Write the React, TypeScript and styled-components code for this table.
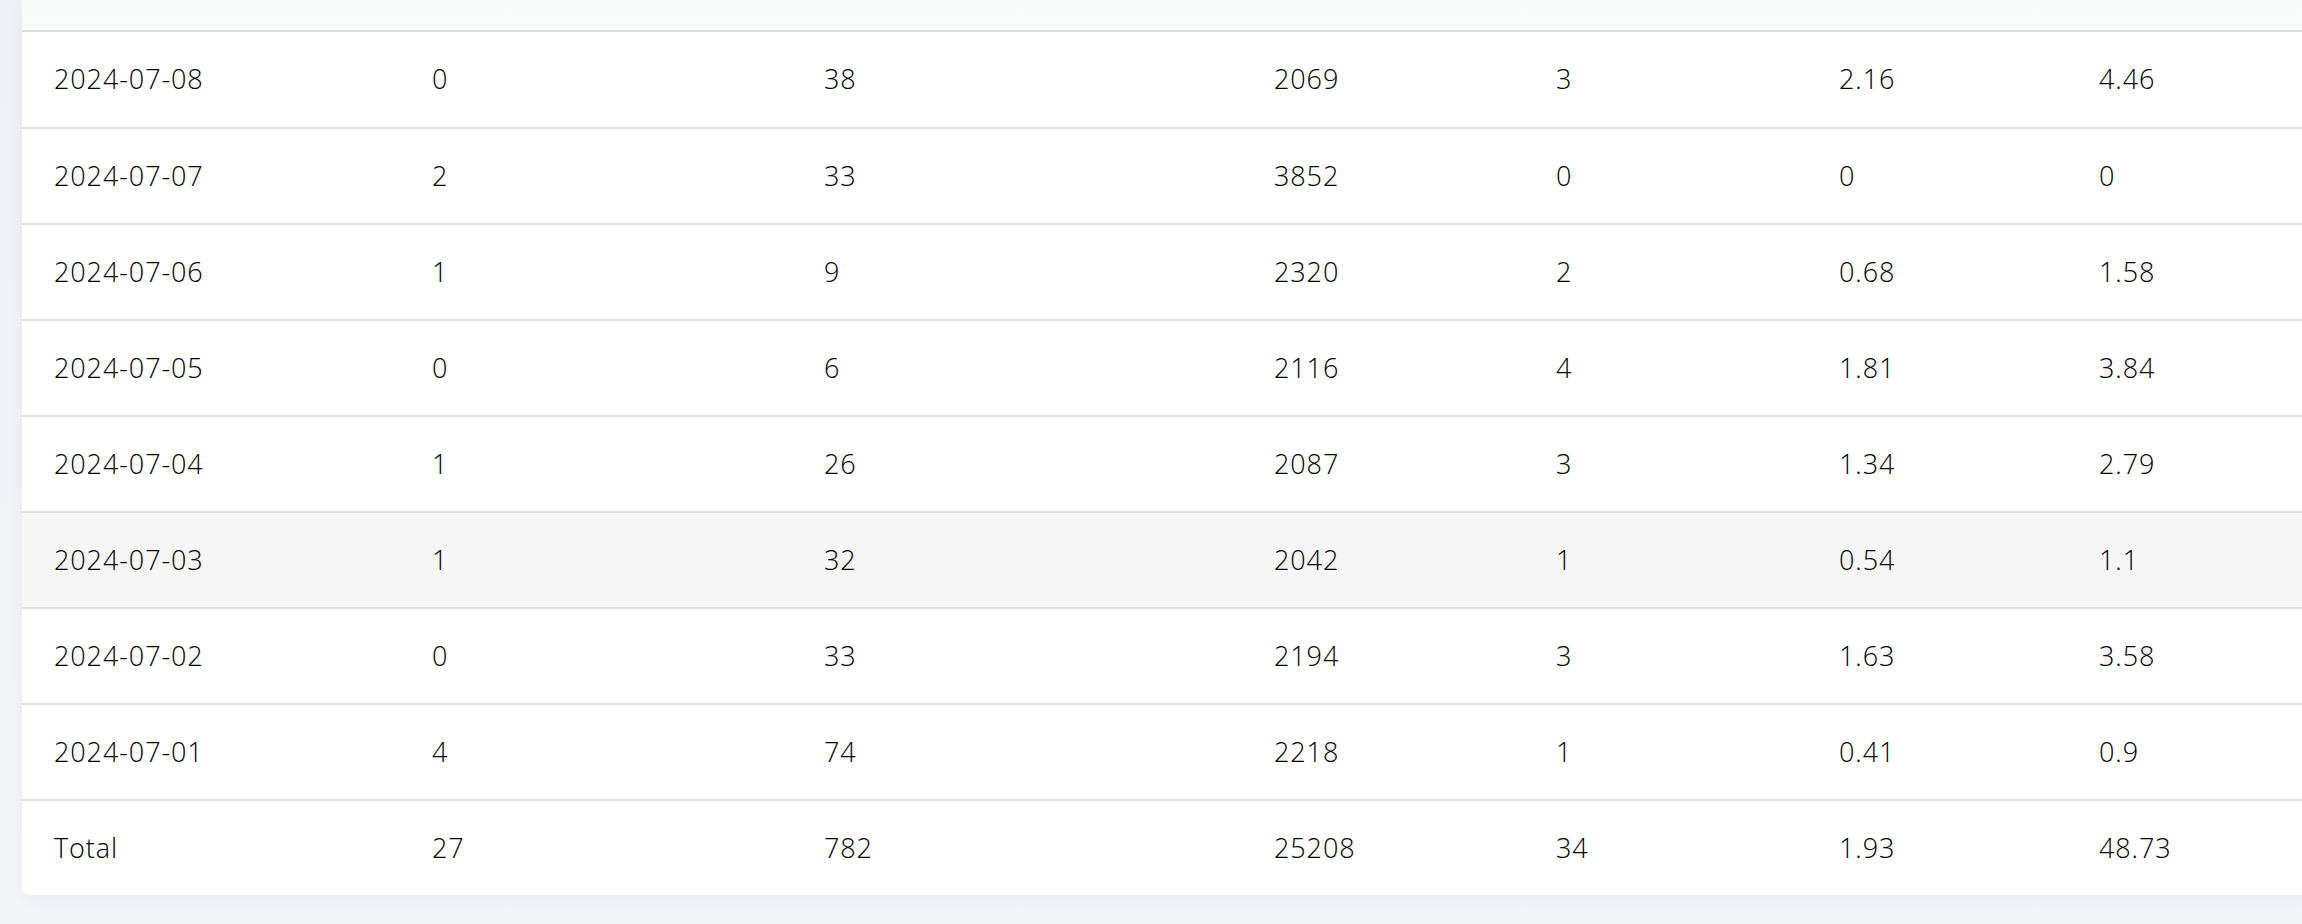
import React from "react";
import styled, { createGlobalStyle } from "styled-components";

const GlobalStyle = createGlobalStyle`
  html, body {
    margin: 0;
    padding: 0;
    background: #f3f4f8;
    overflow: hidden;
  }
  body {
    font-family: "Open Sans", "DejaVu Sans", sans-serif;
    color: #000000;
  }
`;

const Page = styled.div`
  width: 2302px;
  height: 924px;
  overflow: hidden;
  background: linear-gradient(180deg, #eef0f5 0%, #f3f4f8 100%);
  display: flex;
  flex-direction: column;
  padding-left: 22px;
  box-sizing: border-box;
`;

const Panel = styled.div`
  width: 2420px;
  background: #ffffff;
  border-radius: 0 0 8px 8px;
  box-shadow: 0 6px 18px rgba(30, 40, 80, 0.04);
  overflow: hidden;
`;

const HeaderStrip = styled.div`
  height: 30px;
  background: linear-gradient(180deg, #f7f8f8 0%, #fafbfb 100%);
  border-bottom: 2px solid #dedede;
`;

const Table = styled.table`
  width: 100%;
  border-collapse: collapse;
  table-layout: fixed;
  font-size: 27px;
  line-height: 1;
  letter-spacing: 0.9px;
`;

const Row = styled.tr<{ $highlight?: boolean; $last?: boolean }>`
  height: ${(p) => (p.$last ? "95px" : "96px")};
  background: ${(p) => (p.$highlight ? "#f6f6f6" : "#ffffff")};
  border-bottom: ${(p) => (p.$last ? "none" : "2px solid #e0e0e0")};
`;

const Cell = styled.td`
  padding: 0 0 2px 32px;
  vertical-align: middle;
  white-space: nowrap;
  color: #000000;
  font-weight: 300;
`;

const widths = [378, 392, 450, 282, 283, 260, 635];

const rows: string[][] = [
  ["2024-07-08", "0", "38", "2069", "3", "2.16", "4.46"],
  ["2024-07-07", "2", "33", "3852", "0", "0", "0"],
  ["2024-07-06", "1", "9", "2320", "2", "0.68", "1.58"],
  ["2024-07-05", "0", "6", "2116", "4", "1.81", "3.84"],
  ["2024-07-04", "1", "26", "2087", "3", "1.34", "2.79"],
  ["2024-07-03", "1", "32", "2042", "1", "0.54", "1.1"],
  ["2024-07-02", "0", "33", "2194", "3", "1.63", "3.58"],
  ["2024-07-01", "4", "74", "2218", "1", "0.41", "0.9"],
];

const total = ["Total", "27", "782", "25208", "34", "1.93", "48.73"];

export default function App() {
  return (
    <>
      <GlobalStyle />
      <Page>
        <Panel>
          <HeaderStrip />
          <Table>
            <colgroup>
              {widths.map((w, i) => (
                <col key={i} style={{ width: `${w}px` }} />
              ))}
            </colgroup>
            <tbody>
              {rows.map((r) => (
                <Row key={r[0]} $highlight={r[0] === "2024-07-03"}>
                  {r.map((c, i) => (
                    <Cell key={i}>{c}</Cell>
                  ))}
                </Row>
              ))}
              <Row $last>
                {total.map((c, i) => (
                  <Cell key={i}>{c}</Cell>
                ))}
              </Row>
            </tbody>
          </Table>
        </Panel>
      </Page>
    </>
  );
}
